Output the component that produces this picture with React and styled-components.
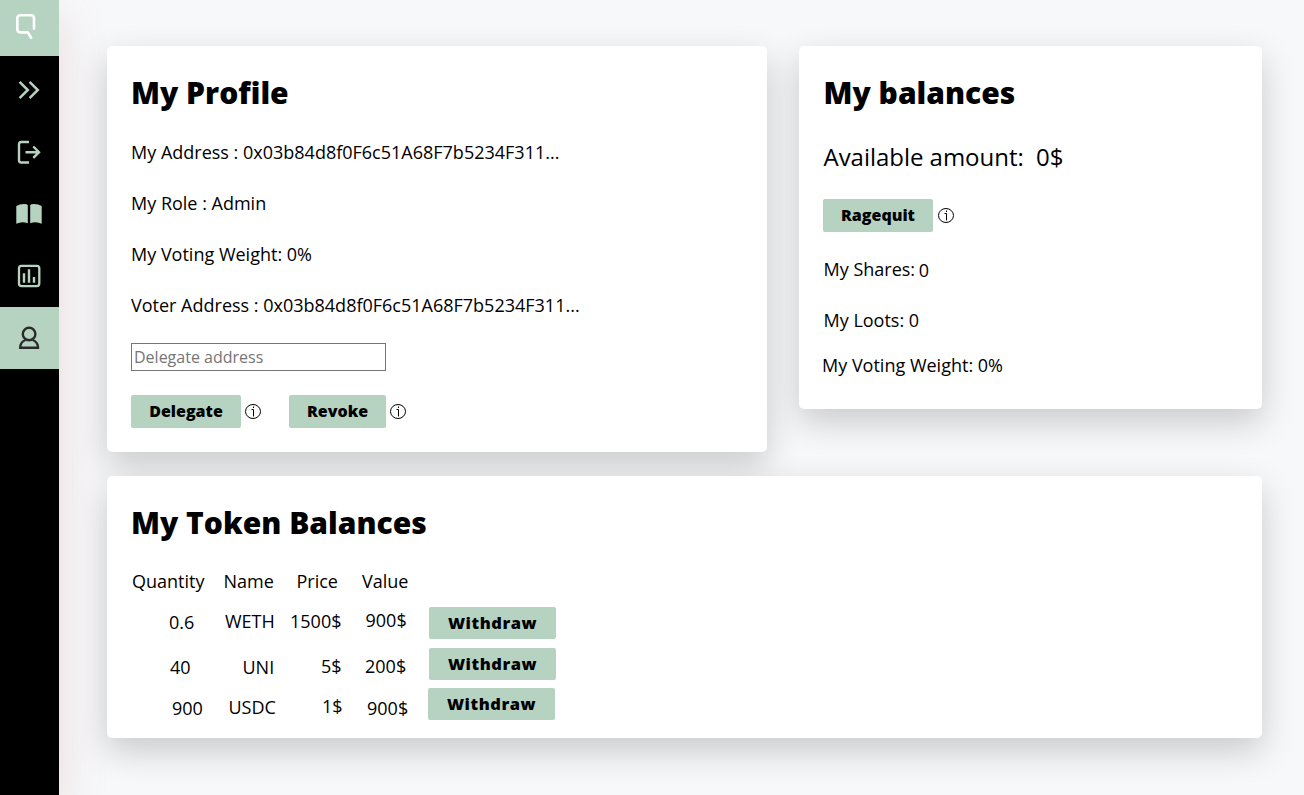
import React from "react";
import styled, { createGlobalStyle } from "styled-components";

const Global = createGlobalStyle`
  * { box-sizing: border-box; }
  body { margin: 0; background: #f7f8fa; color: #000; font: 400 18px/25px "Open Sans", sans-serif; }
  button, input { font-family: inherit; }
`;
const Page = styled.div`
  display: flex;
  height: 795px;
  overflow: hidden;
`;
const Sidebar = styled.nav`
  flex: 0 0 59px;
  background: #000;
  box-shadow: 0 16px 50px rgba(180, 100, 100, 0.2);
`;
const NavItem = styled.a`
  display: flex;
  height: ${(p) => p.$h || 62}px;
  padding: ${(p) => p.$pad || "0 1px 0 0"};
  align-items: center;
  justify-content: center;
  color: ${(p) => p.$color || "#b5d3c0"};
  background: ${(p) => (p.$active ? "#b5d3c0" : "transparent")};
`;
const Main = styled.main`
  flex: 1;
  display: grid;
  grid-template-columns: 660px 463px;
  grid-template-rows: 406px 262px;
  gap: 24px 32px;
  padding: 46px 42px 0 48px;
`;
const Card = styled.section`
  display: flex;
  flex-direction: column;
  align-items: flex-start;
  grid-column: ${(p) => (p.$wide ? "1 / -1" : "auto")};
  height: ${(p) => p.$h}px;
  padding: 24px 24px 0 24px;
  background: #fff;
  border-radius: 5px;
  box-shadow: 0 13px 34px rgba(0, 0, 0, 0.19);
`;
const Title = styled.h2`
  margin: 0 0 0 ${(p) => p.$left || 0}px;
  padding-top: 2px;
  font-size: 30px;
  line-height: 42px;
  font-weight: 800;
  white-space: nowrap;
`;
const Line = styled.p`
  margin: ${(p) => p.$m || "26px 0 0"};
  font-size: ${(p) => p.$size || 18}px;
  line-height: ${(p) => p.$lh || 25}px;
  letter-spacing: ${(p) => p.$ls || 0}px;
  white-space: pre;
`;
const Shifted = styled.span`
  display: inline-block;
  margin-left: -1px;
  padding-top: 1px;
  vertical-align: top;
`;
const Field = styled.input`
  width: 255px;
  height: 28px;
  margin-top: 25px;
  padding: 1px 2px;
  border: 1px solid #767676;
  border-radius: 0;
  font-size: 16px;
  &::placeholder { color: #757575; }
`;
const Actions = styled.div`
  display: flex;
  align-items: center;
  margin-top: ${(p) => p.$top}px;
`;
const Button = styled.button`
  display: block;
  width: ${(p) => p.$w}px;
  height: ${(p) => p.$h || 33}px;
  padding: 0 0 ${(p) => p.$lift || 0}px;
  border: 0;
  border-radius: 2px;
  background: #b5d3c0;
  color: #000;
  font-size: ${(p) => p.$size || 16}px;
  line-height: 22px;
  font-weight: 800;
  letter-spacing: ${(p) => p.$ls || 0}px;
`;
const InfoSvg = styled.svg`
  margin: 0 ${(p) => p.$right || 0}px 0 ${(p) => p.$left || 4}px;
`;
const HeadRow = styled.div`
  display: grid;
  grid-template-columns: 91.5px 73px 65.5px 80px;
  margin: 25px 0 0 1px;
`;
const TokenRow = styled.div`
  display: grid;
  grid-template-columns: 92px 66px 75px 64px 128px;
  margin-top: ${(p) => p.$top}px;
  height: 32px;
`;
const Cell = styled.span`
  padding: ${(p) => p.$y}px 0 0 ${(p) => p.$x}px;
  white-space: nowrap;
`;

const Info = ({ left, right }) => (
  <InfoSvg $left={left} $right={right} width="16" height="15" viewBox="0 0 16 15" fill="none" stroke="#000">
    <ellipse cx="8" cy="7.5" rx="7.5" ry="7" />
    <path d="M8.500 5.500V12.500M6.500 5.500H8.500M8.500 2.500V4" />
  </InfoSvg>
);

const tokens = [
  { top: 13, cells: [["0.6", 38, 3], ["WETH", 2, 2], ["1500$", 1, 2], ["900$", 1.5, 1]], b: 1 },
  { top: 9, cells: [["40", 39, 7], ["UNI", 19.5, 7], ["5$", 32, 6], ["200$", 1, 6]], b: 1 },
  { top: 8, cells: [["900", 41, 8], ["USDC", 5.5, 7], ["1$", 33, 6], ["900$", 3, 8]], b: 0 },
];

export default function App() {
  return (
    <Page>
      <Global />
      <Sidebar>
        <NavItem $active $h={56} $color="#fff" $pad="0 9px 4px 0">
          <svg width="24" height="28" viewBox="0 0 24 28" fill="none" stroke="currentColor" strokeWidth="2.6" strokeLinecap="round" strokeLinejoin="round">
            <path d="M21 16.600V6.300Q21 3.300 18 3.300H7.300Q4.300 3.300 4.300 6.300V16.900Q4.300 20.400 7.800 20.400H14.800L18.100 25.700" />
          </svg>
        </NavItem>
        <NavItem $h={66}>
          <svg width="26" height="26" viewBox="0 0 26 26" fill="none" stroke="currentColor" strokeWidth="2.5">
            <path d="M3.600 5.800L11.800 14L3.600 22.200M13.600 5.800L21.800 14L13.600 22.200" />
          </svg>
        </NavItem>
        <NavItem $h={60}>
          <svg width="26" height="26" viewBox="0 0 26 26" fill="none" stroke="currentColor" strokeWidth="2.400">
            <path d="M13 3H5.200Q3 3 3 5.200V21.300Q3 23.500 5.200 23.500H13M9.500 13.200H23M17.300 7.500L23 13.200L17.300 18.900" />
          </svg>
        </NavItem>
        <NavItem $pad="2px 1px 0 0">
          <svg width="26" height="22" viewBox="0 0 26 22" fill="currentColor">
            <path d="M0.300 3Q3.500 1 8 1Q11 1 11.800 2V20.300Q6 17.800 0.300 20.800ZM14.200 2Q15 1 18 1Q22.500 1 25.700 3V20.800Q20 17.800 14.200 20.300Z" />
          </svg>
        </NavItem>
        <NavItem $h={63} $pad="1px 1px 0 0">
          <svg width="24" height="24" viewBox="0 0 24 24" fill="none" stroke="currentColor" strokeWidth="2.3">
            <rect x="2" y="1.800" width="20.300" height="20.300" rx="2.500" />
            <path d="M7 9.300V18.700M12 5.300V18.700M17 13V18.700" strokeWidth="2.400" />
          </svg>
        </NavItem>
        <NavItem $active $color="#2b2b2b">
          <svg width="22" height="24" viewBox="0 0 22 24" fill="none" stroke="currentColor" strokeWidth="2.4">
            <circle cx="11.100" cy="8" r="6.300" />
            <path d="M7.500 14Q2.200 16 2.200 21.800H20Q20 16 14.700 14" />
          </svg>
        </NavItem>
      </Sidebar>
      <Main>
        <Card $h={406}>
          <Title>My Profile</Title>
          <Line>My Address : 0x03b84d8f0F6c51A68F7b5234F311...</Line>
          <Line>My Role : Admin</Line>
          <Line>My Voting Weight: 0%</Line>
          <Line>Voter Address : 0x03b84d8f0F6c51A68F7b5234F311...</Line>
          <Field placeholder="Delegate address" />
          <Actions $top={24}>
            <Button $w={110} $lift={2}>Delegate</Button>
            <Info right={28} />
            <Button $w={97} $lift={2}>Revoke</Button>
            <Info />
          </Actions>
        </Card>
        <Card $h={363}>
          <Title $left={0.5}>My balances</Title>
          <Line $size={24} $lh={33} $m="26px 0 0 0.5px" $ls={-0.03}>{"Available amount:  0$"}</Line>
          <Actions $top={26}>
            <Button $w={110} $lift={2}>Ragequit</Button>
            <Info left={5} />
          </Actions>
          <Line $m="25px 0 0 0.5px">My Shares: <Shifted>0</Shifted></Line>
          <Line $m="25px 0 0 0.5px">My Loots: 0</Line>
          <Line $m="20px 0 0 -1px">My Voting Weight: 0%</Line>
        </Card>
        <Card $wide $h={262}>
          <Title>My Token Balances</Title>
          <HeadRow>
            <span>Quantity</span><span>Name</span><span>Price</span><span>Value</span>
          </HeadRow>
          {tokens.map((t, i) => (
            <TokenRow key={i} $top={t.top}>
              {t.cells.map(([text, x, y], j) => (
                <Cell key={j} $x={x} $y={y}>{text}</Cell>
              ))}
              <Cell $x={t.b} $y={0}><Button $w={127} $h={32} $size={16.5} $ls={0.55}>Withdraw</Button></Cell>
            </TokenRow>
          ))}
        </Card>
      </Main>
    </Page>
  );
}
